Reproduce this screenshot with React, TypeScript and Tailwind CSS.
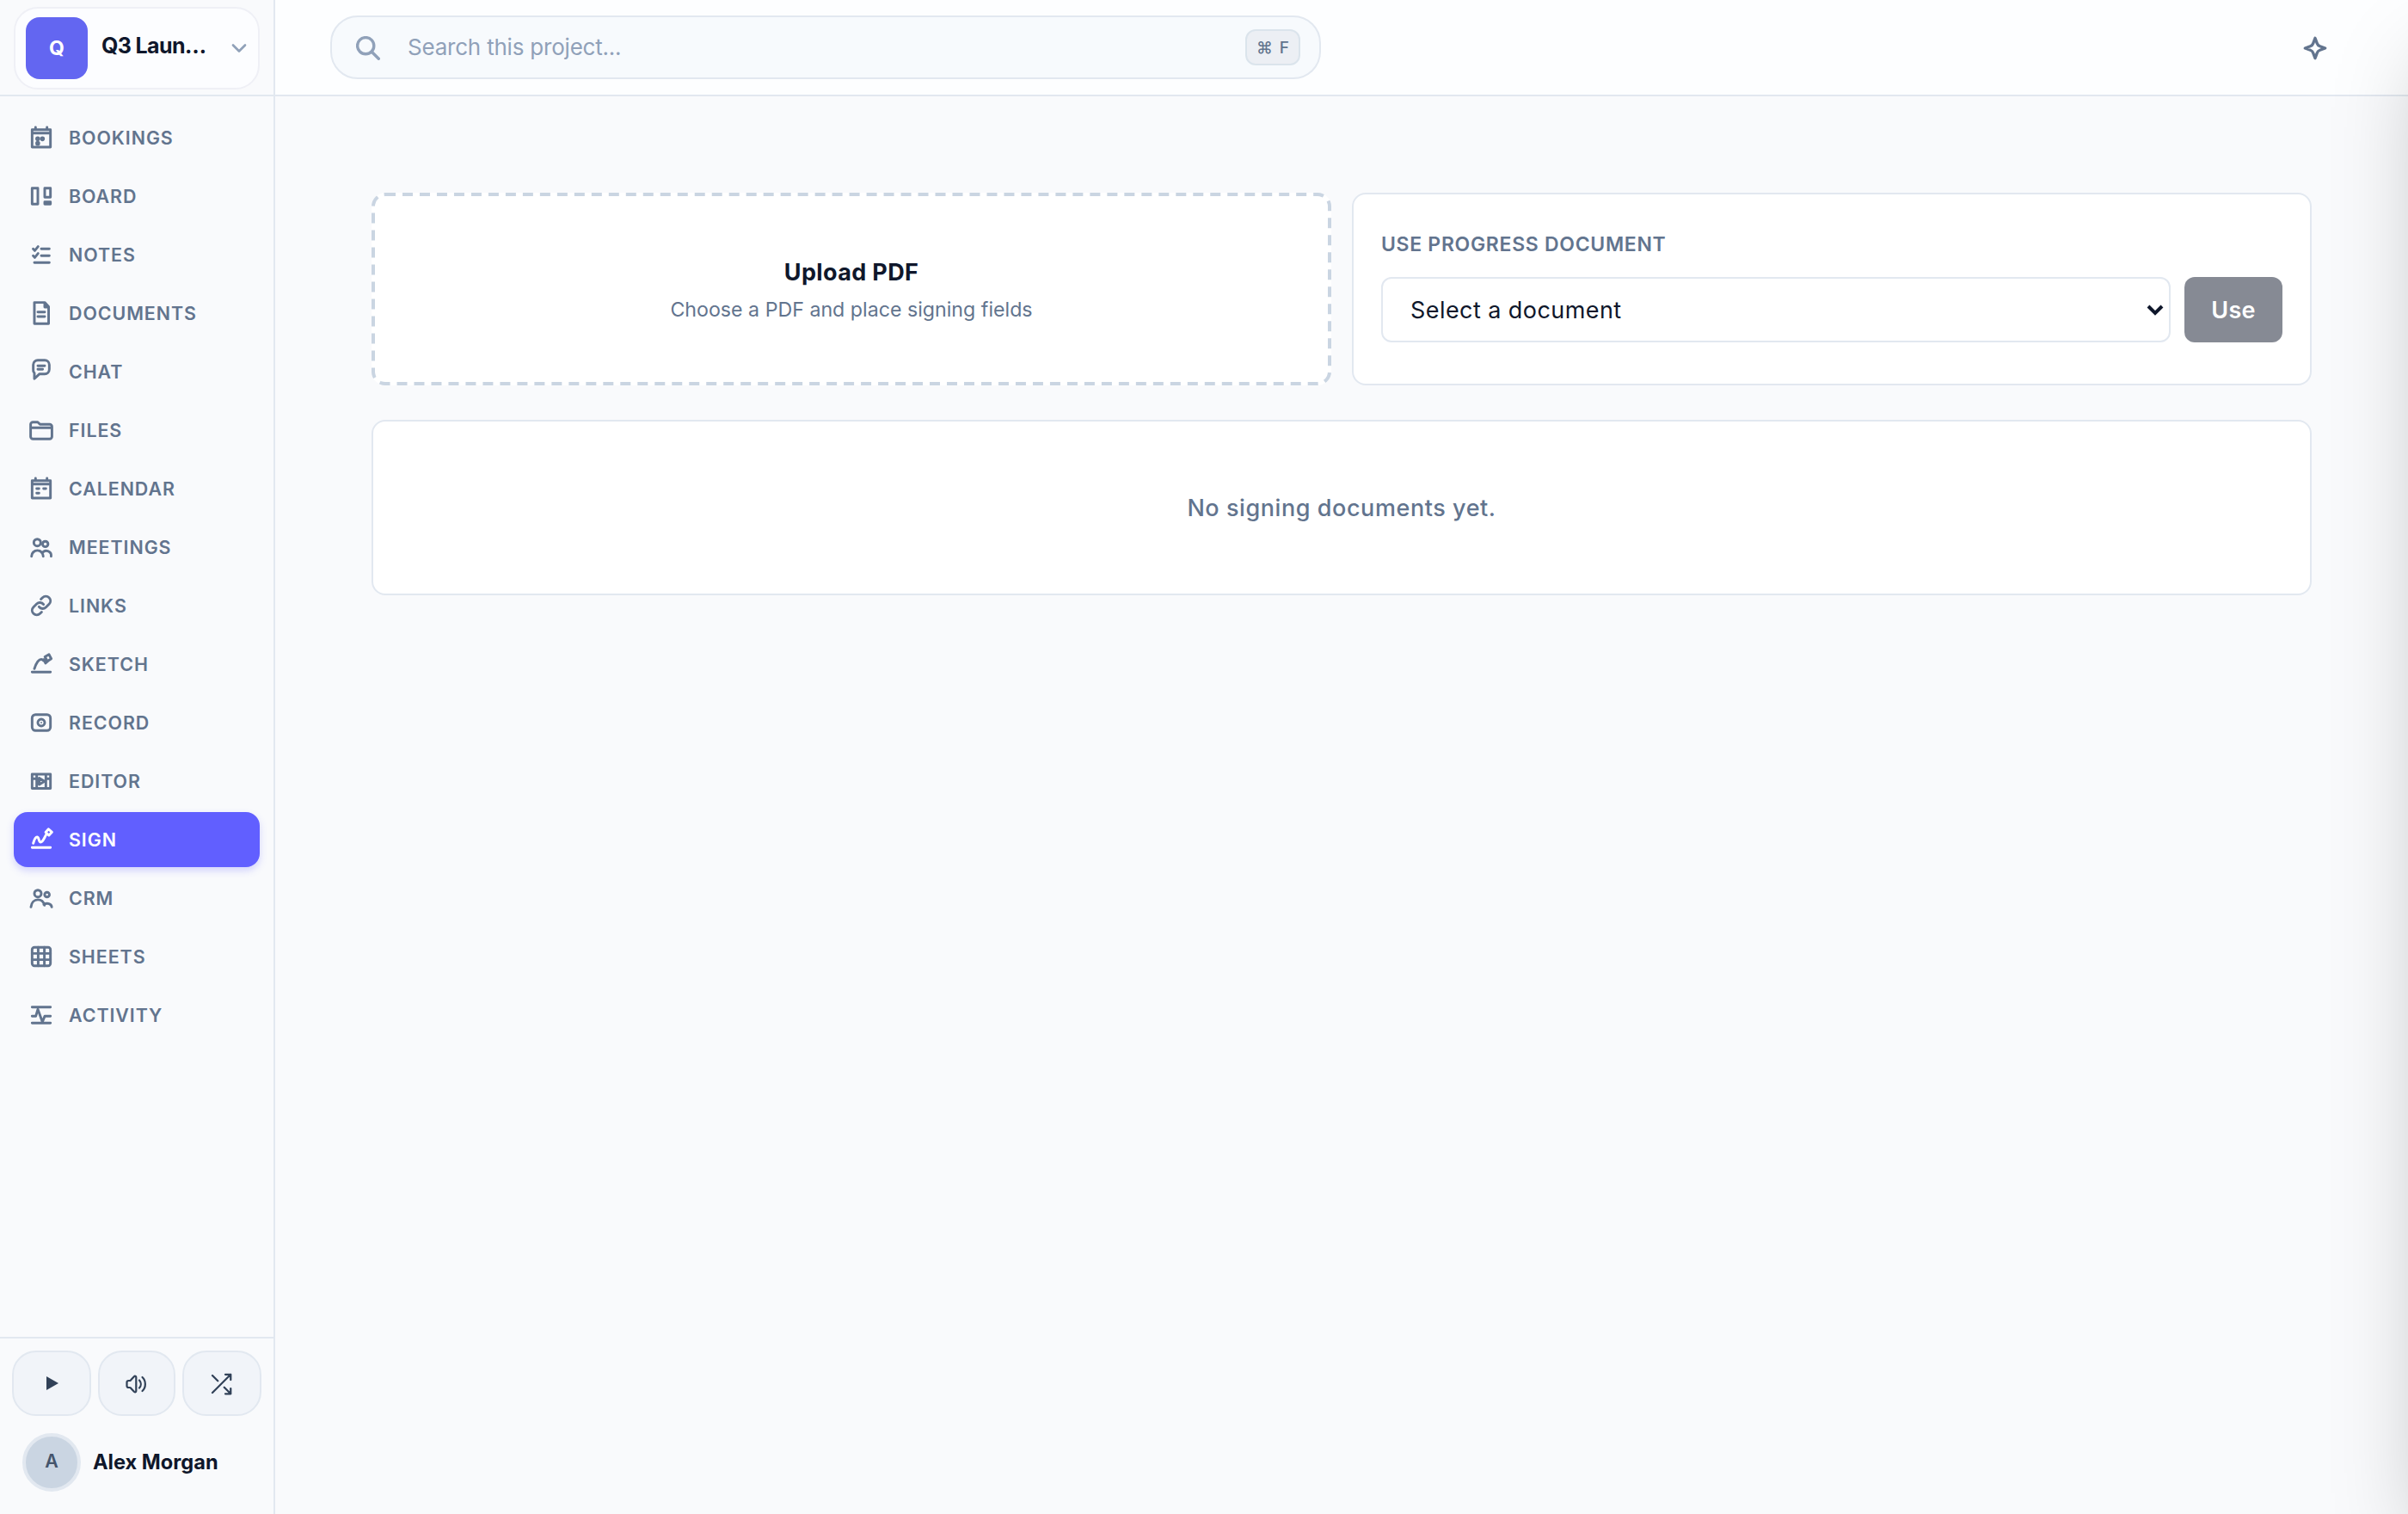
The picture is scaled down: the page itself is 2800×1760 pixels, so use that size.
import type { ReactNode } from "react";
import { ChevronDown } from "lucide-react";

const navItems: { label: string; icon: ReactNode }[] = [
  {
    label: "Bookings",
    icon: (
      <>
        <path d="M4 5h16v15.3H4zM7 3v2M17 3v2M4 8h16" />
        <circle cx="8.9" cy="13" r="1" />
        <circle cx="13" cy="13" r="1" />
        <circle cx="8.9" cy="17" r="1" />
      </>
    ),
  },
  { label: "Board", icon: <path d="M4 5h5v14H4zM15 5h5v8h-5zM15 17h5v2h-5z" /> },
  {
    label: "Notes",
    icon: <path d="M12 7h7M12 13h7M6 19h13M4.9 7l1.4 1.5L9.2 5M4.9 13l1.4 1.5L9.2 11" />,
  },
  {
    label: "Documents",
    icon: <path d="M6 2.7h9l3.4 3.6v14.9H6zM15 2.7v4h3.4M9 11h6M9 15h6" />,
  },
  {
    label: "Chat",
    icon: (
      <path d="M9 2h6a4 4 0 0 1 4 4v4a4 4 0 0 1-4 4h-4.5L6 18.2v-4.8A4 4 0 0 1 5 10V6a4 4 0 0 1 4-4zM9 7h6M9 10h4.2" />
    ),
  },
  {
    label: "Files",
    icon: (
      <path d="M2.7 10V7a2 2 0 0 1 2-2h4.2l2 2h8.4a2 2 0 0 1 2 2v8.7a2 2 0 0 1-2 2H4.7a2 2 0 0 1-2-2zM2.7 10h18.6" />
    ),
  },
  {
    label: "Calendar",
    icon: <path d="M4 5h16v15.3H4zM7 3v2M17 3v2M4 8h16M8 12h2M14 12h2M8 16h2" />,
  },
  {
    label: "Meetings",
    icon: (
      <>
        <circle cx="8.5" cy="8" r="3" />
        <circle cx="15.5" cy="9.3" r="2.4" />
        <path d="M3.5 20a5 5 0 0 1 10.2 0M12.8 17.4a4.2 4.2 0 0 1 7.8 2.6" />
      </>
    ),
  },
  {
    label: "Links",
    icon: (
      <path d="M10 13a4 4 0 0 0 6 .5l2.8-2.8a4 4 0 0 0-5.7-5.7l-1.4 1.4M14 11a4 4 0 0 0-6-.5l-2.8 2.8a4 4 0 0 0 5.7 5.7l1.4-1.4" />
    ),
  },
  {
    label: "Sketch",
    icon: (
      <path d="M4 19h16M6 16c1.5-4.6 3.6-8.1 6-8.1.9 0 1.5.5 2 1.1M15.2 5.6l3.5-2 2 3.7-3.4 2.2zM14.2 8l1.5 3.2 2.8-2.4" />
    ),
  },
  {
    label: "Record",
    icon: (
      <>
        <rect x="4" y="5" width="16" height="14" rx="3" />
        <circle cx="12" cy="12" r="3" />
        <circle cx="12" cy="12" r="0.7" fill="currentColor" stroke="none" />
      </>
    ),
  },
  {
    label: "Editor",
    icon: <path d="M4 6h16v12.4H4zM8 6v12.4M16 6v12.4M4 10h4M16 10h4M10.2 9.4l4.6 2.8-4.6 2.8z" />,
  },
  {
    label: "Sign",
    icon: (
      <path d="M4 19h16M5 15.2c1-3.4 2.1-5.4 3.3-5.4 2 0 1.2 4.4 3.2 4.4 1.8 0 2.7-2.8 4.7-6.4M18.3 2.8l3 2.7-2.6 2.8-2.9-2.7z" />
    ),
  },
  {
    label: "CRM",
    icon: (
      <>
        <circle cx="9" cy="8" r="3" />
        <circle cx="17" cy="9" r="2.1" />
        <path d="M3 19.8c.4-3.8 2.8-6.4 6-6.4 2.6 0 5 1.8 5.8 4.8M14.2 17.6c3-1.8 6.6-.8 6.9 2.2" />
      </>
    ),
  },
  {
    label: "Sheets",
    icon: (
      <>
        <rect x="4" y="4" width="16" height="16" rx="2" />
        <path d="M9.3 4v16M14.7 4v16M4 9.3h16M4 14.7h16" />
      </>
    ),
  },
  { label: "Activity", icon: <path d="M4 5h16M4 19h16M4 13h3.2L9 7l4 11 2-5h5" /> },
];

function Icon({ children, className }: { children: ReactNode; className?: string }) {
  return (
    <svg
      viewBox="0 0 24 24"
      fill="none"
      stroke="currentColor"
      strokeWidth="2.2"
      strokeLinecap="round"
      strokeLinejoin="round"
      className={className ?? "size-4 shrink-0"}
    >
      {children}
    </svg>
  );
}

function Sidebar({ active }: { active: string }) {
  const playerButton =
    "flex h-[38px] items-center justify-center rounded-[14px] border border-slate-200 bg-[#f1f4f9] text-slate-700";

  return (
    <aside className="flex w-40 shrink-0 flex-col border-r border-slate-200 bg-[#f9fafc]">
      <div className="h-14 border-b border-slate-200 px-2 pt-1">
        <button className="flex h-12 w-full items-center rounded-[14px] border border-[#eff0f6] bg-[#fcfdff] pl-1.5 pr-1">
          <span className="flex size-9 items-center justify-center rounded-lg bg-[#6366f1] pt-px text-[11.5px] font-bold text-white">
            Q
          </span>
          <span className="ml-2 flex-1 pb-0.5 text-left text-[12.5px] font-bold tracking-[-0.025em] text-slate-900">
            Q3 Laun…
          </span>
          <ChevronDown className="size-3.5 text-slate-400" strokeWidth={2.3} />
        </button>
      </div>

      <nav className="flex flex-1 flex-col gap-0.5 px-2 pt-2">
        {navItems.map((item) => (
          <a
            key={item.label}
            className={
              item.label === active
                ? "flex h-8 items-center gap-2 rounded-lg bg-[#615fff] px-2 text-white shadow-[0_2px_4px_rgba(97,95,255,0.25)]"
                : "flex h-8 items-center gap-2 rounded-lg px-2 text-slate-500"
            }
          >
            <Icon>{item.icon}</Icon>
            <span className="pt-[1.5px] text-[10.7px] font-semibold uppercase tracking-[0.045em]">
              {item.label}
            </span>
          </a>
        ))}
      </nav>

      <div className="h-[103px] border-t border-slate-200 px-[7px] pt-[7px]">
        <div className="grid grid-cols-3 gap-1">
          <button className={playerButton}>
            <svg viewBox="0 0 14 16" className="ml-px h-2 w-[7px]" fill="currentColor">
              <path d="M0 0l14 8-14 8z" />
            </svg>
          </button>
          <button className={playerButton}>
            <svg
              viewBox="0 0 30 30"
              className="size-[15px]"
              fill="none"
              stroke="currentColor"
              strokeWidth="2.2"
              strokeLinecap="round"
              strokeLinejoin="round"
            >
              <path d="M3.5 13v4a2 2 0 0 0 2 2h1.4a1.5 1.5 0 0 1 1 .4l4 4.4c.9.9 2.4.4 2.4-.9V7.1c0-1.3-1.5-1.8-2.4-.9l-4 4.4a1.5 1.5 0 0 1-1 .4H5.5a2 2 0 0 0-2 2z" />
              <path d="M18 10.500c2.400 2.600 2.400 6.400 0 9M21.500 7c4.500 4 4.500 12 0 16" />
            </svg>
          </button>
          <button className={playerButton}>
            <svg
              viewBox="0 0 24 24"
              className="mr-px size-[15px]"
              fill="none"
              stroke="currentColor"
              strokeWidth="1.8"
              strokeLinecap="round"
              strokeLinejoin="round"
            >
              <path d="M16 3h5v5M4 20L21 3M21 16v5h-5M15 15l6 6M4 4l5 5" />
            </svg>
          </button>
        </div>
        <div className="mt-2.5 flex items-center pl-1.5">
          <span className="flex size-[34px] items-center justify-center rounded-full border-2 border-slate-200 bg-[#cad5e2] pt-px text-[10.7px] font-semibold text-slate-600">
            A
          </span>
          <span className="ml-[7px] pt-[1.5px] text-[11.8px] font-bold text-slate-900">Alex Morgan</span>
        </div>
      </div>
    </aside>
  );
}

function Header() {
  return (
    <header className="flex h-14 items-center justify-between border-b border-slate-200 bg-[#fdfeff] pl-8 pr-[46.5px]">
      <div className="flex h-[37px] w-xl items-center rounded-2xl border border-slate-200 bg-[#f7fafd] pl-3.5 pr-[11px]">
        <svg
          viewBox="0 0 28 28"
          className="size-3.5 text-slate-400"
          fill="none"
          stroke="currentColor"
          strokeWidth="3.4"
          strokeLinecap="round"
        >
          <circle cx="11.2" cy="11.2" r="9.6" />
          <path d="M18.5 18.5l7.8 7.8" />
        </svg>
        <span className="ml-4 flex-1 pt-px text-[13px] tracking-[-0.008em] text-slate-400">
          Search this project...
        </span>
        <kbd className="flex h-[21px] w-8 items-center justify-center rounded-md border border-[#dbe4ec] bg-[#eceff4] pt-px font-[Inter] text-[9.5px] font-medium text-slate-500 [word-spacing:1.5px]">
          ⌘ F
        </kbd>
      </div>
      <Icon className="size-4 text-slate-500">
        <path
          strokeWidth="2.5"
          d="M12 3.2l1.7 4.6a4 4 0 0 0 2.5 2.5l4.6 1.7-4.6 1.7a4 4 0 0 0-2.5 2.5L12 20.8l-1.7-4.6a4 4 0 0 0-2.5-2.5L3.2 12l4.6-1.7a4 4 0 0 0 2.5-2.5z"
        />
      </Icon>
    </header>
  );
}

export default function App() {
  return (
    <div className="h-[1760px] w-[2800px] overflow-hidden">
      <div className="relative flex h-[880px] w-[1400px] origin-top-left scale-200 overflow-hidden bg-[#f9fafc] font-[Inter,sans-serif] text-slate-900">
        <Sidebar active="Sign" />

        <div className="flex min-w-0 flex-1 flex-col">
          <Header />

          <main className="flex-1 p-14">
            <div className="grid grid-cols-2 gap-3">
              <button className="flex h-28 flex-col items-center justify-center rounded-lg border-2 border-dashed border-slate-300 bg-white pb-px">
                <span className="text-[13.5px] font-bold leading-5 tracking-[0.013em]">Upload PDF</span>
                <span className="mt-1 text-[11.6px] leading-4 text-slate-500">
                  Choose a PDF and place signing fields
                </span>
              </button>

              <section className="h-28 rounded-lg border border-slate-200 bg-white px-4 pt-[21px]">
                <div className="text-[11.5px] font-semibold uppercase leading-4 tracking-[0.03em] text-slate-500">
                  Use Progress Document
                </div>
                <div className="mt-[11px] flex gap-2">
                  <select className="h-[38px] flex-1 rounded-md border border-slate-200 bg-white px-3 text-[13.5px] tracking-[0.016em]">
                    <option>Select a document</option>
                  </select>
                  <button
                    disabled
                    className="h-[38px] w-[57px] rounded-md bg-slate-900 text-[13.5px] font-semibold tracking-[0.01em] text-white opacity-50"
                  >
                    Use
                  </button>
                </div>
              </section>
            </div>

            <div className="mt-5 flex h-[102px] items-center justify-center rounded-lg border border-slate-200 bg-white text-[13.5px] font-medium tracking-[0.021em] text-slate-500">
              No signing documents yet.
            </div>
          </main>
        </div>

        {/* closed drawer, only its shadow reaches into the page */}
        <div className="absolute left-full top-0 h-full w-96 bg-white shadow-2xl" />
      </div>
    </div>
  );
}
